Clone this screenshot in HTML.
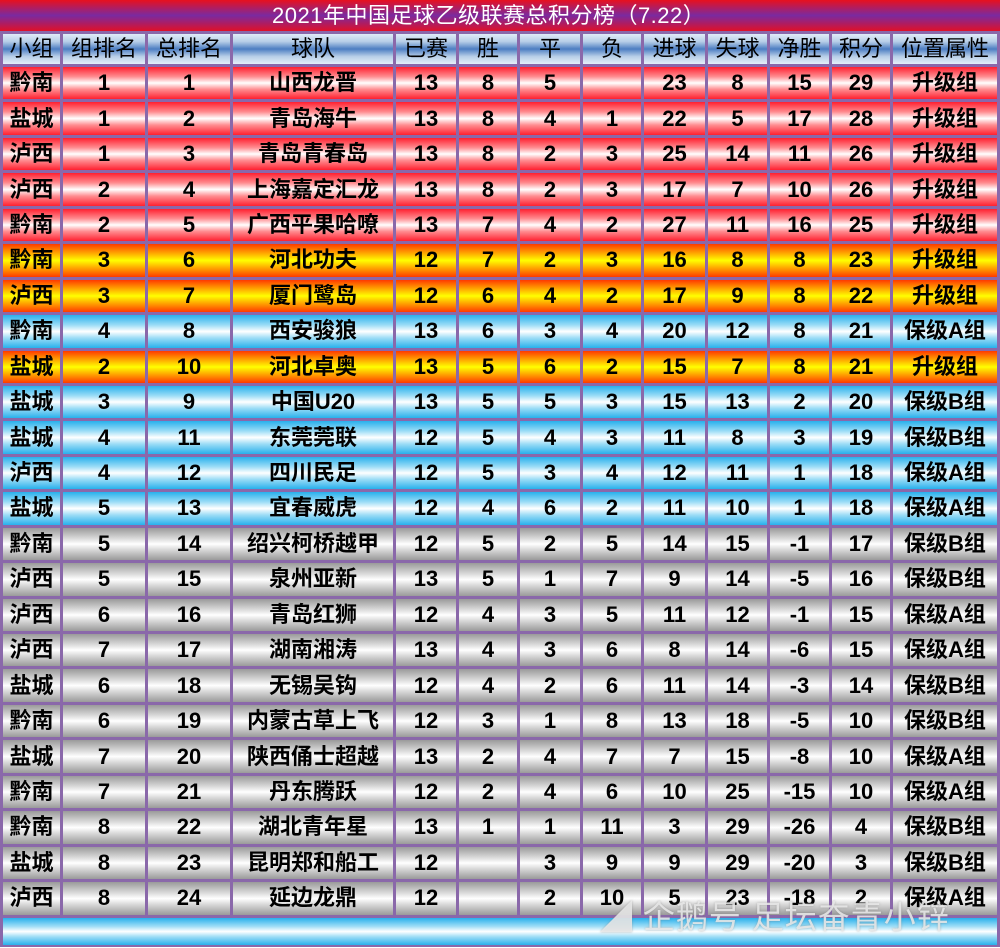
<!DOCTYPE html>
<html><head><meta charset="utf-8"><style>
body{margin:0;width:1000px;height:947px;overflow:hidden;background:#fff}
#w{position:relative;width:1000px;height:947px;background:#8a68aa}
#t{position:absolute;left:0;top:0;width:1000px;height:31px;background:linear-gradient(#e8101e 0%,#7a2aa0 50%,#e01028 100%);color:#fff;font:22px "Liberation Sans","Noto Sans CJK SC",sans-serif;line-height:31px;}
#t span{position:absolute;left:272px;letter-spacing:0.5px}
table{position:absolute;left:0;top:31px;border-collapse:separate;border-spacing:3px;table-layout:fixed;width:1000px}
td{padding:0;text-align:center;font:bold 22px "Liberation Sans","Noto Sans CJK SC",sans-serif;color:#000;height:32.45px;line-height:32px;white-space:nowrap;overflow:hidden}
tr.h td{font-weight:normal;height:30px;line-height:30px;background:linear-gradient(#e0ecf8 0%,#b8cfe8 25%,#4d7ec2 50%,#b8cfe8 75%,#e4eef8 100%)}
tr.r td{background:linear-gradient(#ff2030 0%,#ff8c90 30%,#fff 50%,#ff8c90 70%,#ff2030 100%)}
tr.o td{background:linear-gradient(#ff3a00 0%,#ffb000 30%,#ffff00 50%,#ffb000 70%,#ff3a00 100%)}
tr.b td{background:linear-gradient(#28b0ec 0%,#9adcf6 30%,#fff 50%,#9adcf6 70%,#28b0ec 100%)}
tr.g td{background:linear-gradient(#9a9a9a 0%,#d4d4d4 30%,#fff 50%,#d4d4d4 70%,#9a9a9a 100%)}
tr.f td{height:27px;background:linear-gradient(#28b0ec 0%,#9adcf6 30%,#fff 50%,#9adcf6 70%,#28b0ec 100%)}
#wm{position:absolute;left:600px;top:892px;font:32px "Liberation Sans","Noto Sans CJK SC",sans-serif;color:rgba(235,235,235,.85);text-shadow:0 0 2px rgba(120,120,120,.5);letter-spacing:1px}
</style></head><body><div id="w">
<div id="t"><span>2021年中国足球乙级联赛总积分榜（7.22）</span></div>
<table>
<colgroup><col style="width:57px"><col style="width:82px"><col style="width:82px"><col style="width:160px"><col style="width:60px"><col style="width:58px"><col style="width:60px"><col style="width:58px"><col style="width:61px"><col style="width:59px"><col style="width:59px"><col style="width:58px"><col style="width:104px"></colgroup>
<tr class="h"><td>小组</td><td>组排名</td><td>总排名</td><td>球队</td><td>已赛</td><td>胜</td><td>平</td><td>负</td><td>进球</td><td>失球</td><td>净胜</td><td>积分</td><td>位置属性</td></tr>
<tr class="r"><td>黔南</td><td>1</td><td>1</td><td>山西龙晋</td><td>13</td><td>8</td><td>5</td><td></td><td>23</td><td>8</td><td>15</td><td>29</td><td>升级组</td></tr>
<tr class="r"><td>盐城</td><td>1</td><td>2</td><td>青岛海牛</td><td>13</td><td>8</td><td>4</td><td>1</td><td>22</td><td>5</td><td>17</td><td>28</td><td>升级组</td></tr>
<tr class="r"><td>泸西</td><td>1</td><td>3</td><td>青岛青春岛</td><td>13</td><td>8</td><td>2</td><td>3</td><td>25</td><td>14</td><td>11</td><td>26</td><td>升级组</td></tr>
<tr class="r"><td>泸西</td><td>2</td><td>4</td><td>上海嘉定汇龙</td><td>13</td><td>8</td><td>2</td><td>3</td><td>17</td><td>7</td><td>10</td><td>26</td><td>升级组</td></tr>
<tr class="r"><td>黔南</td><td>2</td><td>5</td><td>广西平果哈嘹</td><td>13</td><td>7</td><td>4</td><td>2</td><td>27</td><td>11</td><td>16</td><td>25</td><td>升级组</td></tr>
<tr class="o"><td>黔南</td><td>3</td><td>6</td><td>河北功夫</td><td>12</td><td>7</td><td>2</td><td>3</td><td>16</td><td>8</td><td>8</td><td>23</td><td>升级组</td></tr>
<tr class="o"><td>泸西</td><td>3</td><td>7</td><td>厦门鹭岛</td><td>12</td><td>6</td><td>4</td><td>2</td><td>17</td><td>9</td><td>8</td><td>22</td><td>升级组</td></tr>
<tr class="b"><td>黔南</td><td>4</td><td>8</td><td>西安骏狼</td><td>13</td><td>6</td><td>3</td><td>4</td><td>20</td><td>12</td><td>8</td><td>21</td><td>保级A组</td></tr>
<tr class="o"><td>盐城</td><td>2</td><td>10</td><td>河北卓奥</td><td>13</td><td>5</td><td>6</td><td>2</td><td>15</td><td>7</td><td>8</td><td>21</td><td>升级组</td></tr>
<tr class="b"><td>盐城</td><td>3</td><td>9</td><td>中国U20</td><td>13</td><td>5</td><td>5</td><td>3</td><td>15</td><td>13</td><td>2</td><td>20</td><td>保级B组</td></tr>
<tr class="b"><td>盐城</td><td>4</td><td>11</td><td>东莞莞联</td><td>12</td><td>5</td><td>4</td><td>3</td><td>11</td><td>8</td><td>3</td><td>19</td><td>保级B组</td></tr>
<tr class="b"><td>泸西</td><td>4</td><td>12</td><td>四川民足</td><td>12</td><td>5</td><td>3</td><td>4</td><td>12</td><td>11</td><td>1</td><td>18</td><td>保级A组</td></tr>
<tr class="b"><td>盐城</td><td>5</td><td>13</td><td>宜春威虎</td><td>12</td><td>4</td><td>6</td><td>2</td><td>11</td><td>10</td><td>1</td><td>18</td><td>保级A组</td></tr>
<tr class="g"><td>黔南</td><td>5</td><td>14</td><td>绍兴柯桥越甲</td><td>12</td><td>5</td><td>2</td><td>5</td><td>14</td><td>15</td><td>-1</td><td>17</td><td>保级B组</td></tr>
<tr class="g"><td>泸西</td><td>5</td><td>15</td><td>泉州亚新</td><td>13</td><td>5</td><td>1</td><td>7</td><td>9</td><td>14</td><td>-5</td><td>16</td><td>保级B组</td></tr>
<tr class="g"><td>泸西</td><td>6</td><td>16</td><td>青岛红狮</td><td>12</td><td>4</td><td>3</td><td>5</td><td>11</td><td>12</td><td>-1</td><td>15</td><td>保级A组</td></tr>
<tr class="g"><td>泸西</td><td>7</td><td>17</td><td>湖南湘涛</td><td>13</td><td>4</td><td>3</td><td>6</td><td>8</td><td>14</td><td>-6</td><td>15</td><td>保级A组</td></tr>
<tr class="g"><td>盐城</td><td>6</td><td>18</td><td>无锡吴钩</td><td>12</td><td>4</td><td>2</td><td>6</td><td>11</td><td>14</td><td>-3</td><td>14</td><td>保级B组</td></tr>
<tr class="g"><td>黔南</td><td>6</td><td>19</td><td>内蒙古草上飞</td><td>12</td><td>3</td><td>1</td><td>8</td><td>13</td><td>18</td><td>-5</td><td>10</td><td>保级B组</td></tr>
<tr class="g"><td>盐城</td><td>7</td><td>20</td><td>陕西俑士超越</td><td>13</td><td>2</td><td>4</td><td>7</td><td>7</td><td>15</td><td>-8</td><td>10</td><td>保级A组</td></tr>
<tr class="g"><td>黔南</td><td>7</td><td>21</td><td>丹东腾跃</td><td>12</td><td>2</td><td>4</td><td>6</td><td>10</td><td>25</td><td>-15</td><td>10</td><td>保级A组</td></tr>
<tr class="g"><td>黔南</td><td>8</td><td>22</td><td>湖北青年星</td><td>13</td><td>1</td><td>1</td><td>11</td><td>3</td><td>29</td><td>-26</td><td>4</td><td>保级B组</td></tr>
<tr class="g"><td>盐城</td><td>8</td><td>23</td><td>昆明郑和船工</td><td>12</td><td></td><td>3</td><td>9</td><td>9</td><td>29</td><td>-20</td><td>3</td><td>保级B组</td></tr>
<tr class="g"><td>泸西</td><td>8</td><td>24</td><td>延边龙鼎</td><td>12</td><td></td><td>2</td><td>10</td><td>5</td><td>23</td><td>-18</td><td>2</td><td>保级A组</td></tr>
<tr class="f"><td colspan="13"></td></tr>
</table>
<div id="wm">◢ 企鹅号 足坛奋青小锌</div>
</div></body></html>
